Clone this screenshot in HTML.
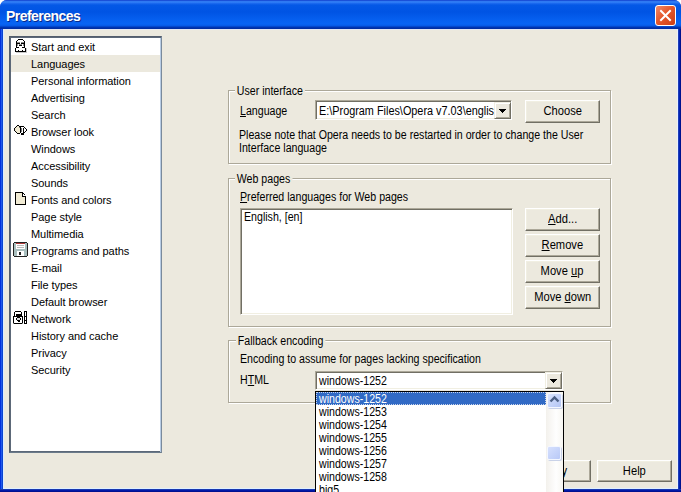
<!DOCTYPE html>
<html><head><meta charset="utf-8">
<style>
*{box-sizing:border-box}
html,body{margin:0;padding:0}
body{width:681px;height:492px;overflow:hidden;position:relative;background:#fff;font-family:"Liberation Sans",sans-serif;font-size:12px;color:#000}
.tx{display:inline-block;transform:scaleX(0.885);transform-origin:0 50%}
.btn .tx{transform:scaleX(0.93);transform-origin:50% 50%}
#frame{position:absolute;left:0;top:0;width:681px;height:492px;border-radius:7px 7px 0 0;background:linear-gradient(90deg,#0030dc 0,#0030dc 1px,#2058ea 1px,#2058ea 2px,#0a44d0 2px,#0a44d0 3px,#0842e0 3px,#0842e0 678px,#1c3cb8 678px,#1c3cb8 679px,#0022b4 679px,#0022b4 680px,#00128e 680px)}
#bot{position:absolute;left:0;top:489px;width:681px;height:3px;background:linear-gradient(180deg,#1838b0 0,#1838b0 1px,#0018a8 1px,#0018a8 2px,#001090 2px)}
#title{position:absolute;left:0;top:0;width:681px;height:29px;border-radius:7px 7px 0 0;
 background:linear-gradient(180deg,#0a30c4 0px,#2a70ec 1px,#3482f8 2px,#1a68ee 3.5px,#0458e6 5px,#0054e4 12px,#0660f0 20px,#0864f4 24px,#0658e4 26px,#0038b8 27px,#002a9c 29px)}
#title .t{position:absolute;left:6px;top:8px;color:#fff;font-weight:bold;font-size:14px;letter-spacing:-0.55px;text-shadow:1px 1px 0 #0a2a8a}
#close{position:absolute;left:655px;top:5px;width:21px;height:21px;border:1px solid #fff;border-radius:3px;background:linear-gradient(135deg,#f08a6a 0%,#e5582c 45%,#cc3e16 100%)}
#client{position:absolute;left:3px;top:29px;width:675px;height:460px;background:#ece9de;border-left:1px solid #dcecff;border-top:1px solid #e4e8f4;border-bottom:1px solid #e0f0ff;border-right:1px solid #e8f0ff}
#tree{position:absolute;left:9px;top:36px;width:153px;height:417px;background:#fff;border-style:solid;border-width:1px;border-color:#535d6c #7a8a9c #6a7a8a #535d6c;box-shadow:inset 1px 1px 0 #5c6878,inset -1px 0 0 #b8cce4,inset 0 -1px 0 #5c6878}
.item{position:absolute;left:1px;width:149px;height:17px;line-height:17px;padding-left:20px;padding-top:1px;white-space:nowrap;font-size:11px;letter-spacing:-0.05px}
.item.sel{background:#ece9de}
.grp{position:absolute;border:1px solid #aca899;box-shadow:1px 1px 0 #fff, inset 1px 1px 0 #fff}
.glab{position:absolute;background:#ece9de;padding:0 2px;line-height:13px;white-space:nowrap;transform:scaleX(0.885);transform-origin:0 50%}
.lbl{position:absolute;line-height:13px;white-space:nowrap;transform:scaleX(0.885);transform-origin:0 50%}
.btn{position:absolute;width:75px;height:23px;background:#ece9de;border-top:1px solid #fff;border-left:1px solid #fff;border-right:1px solid #716f64;border-bottom:1px solid #716f64;box-shadow:inset -1px -1px 0 #aca899, inset 1px 1px 0 #f1efe2;text-align:center;line-height:20px;white-space:nowrap}
.u{text-decoration:underline}
.combo{position:absolute;background:#fff;border-top:1px solid #aca899;border-left:1px solid #aca899;border-right:1px solid #fff;border-bottom:1px solid #fff;box-shadow:inset 1px 1px 0 #716f64, inset -1px -1px 0 #f1efe2;overflow:hidden;white-space:nowrap}
.dbtn{position:absolute;width:17px;height:17px;background:#ece9de;border-top:1px solid #f1efe2;border-left:1px solid #f1efe2;border-right:1px solid #716f64;border-bottom:1px solid #716f64;box-shadow:inset 1px 1px 0 #fff, inset -1px -1px 0 #aca899}
.dbtn svg{position:absolute;left:0;top:0}
#dd{position:absolute;left:315px;top:391px;width:249px;height:110px;background:#fff;border:1px solid #000;overflow:hidden}
.opt{position:absolute;left:0;width:230px;height:13px;line-height:13px;padding-left:3px;padding-top:1px;white-space:nowrap}
.opt.sel{background:#316ac5;color:#fff;outline:1px dotted #c8d4ea;outline-offset:-1px}
#sb{position:absolute;left:230px;top:0;width:17px;height:110px;background:linear-gradient(90deg,#f3f1ec,#fefefe 60%,#f7f6f1)}
#sbup{position:absolute;left:1px;top:1px;width:15px;height:15px;border:1px solid #f4f7ff;border-radius:2px;background:linear-gradient(135deg,#dde6fd,#c2d1f8 60%,#b4c5f2);box-shadow:1px 1px 0 #c9d2e8}
#thumb{position:absolute;left:1px;top:54px;width:14px;height:14px;border:1px solid #f4f7ff;border-radius:2px;background:linear-gradient(135deg,#d6e0fd,#c4d2fa 60%,#b8c8f6);box-shadow:1px 1px 0 #c9d2e8}
</style></head><body>
<div id="frame"></div><div id="bot"></div>
<div id="title"><div class="t">Preferences</div><div id="close"><svg width="19" height="19" style="position:absolute;left:0;top:0"><path d="M5 5 L14 14 M14 5 L5 14" stroke="#fff" stroke-width="2" stroke-linecap="square"/></svg></div></div>
<div id="client"></div>
<div id="tree">
<div class="item" style="top:1px">Start and exit</div>
<div class="item sel" style="top:18px">Languages</div>
<div class="item" style="top:35px">Personal information</div>
<div class="item" style="top:52px">Advertising</div>
<div class="item" style="top:69px">Search</div>
<div class="item" style="top:86px">Browser look</div>
<div class="item" style="top:103px">Windows</div>
<div class="item" style="top:120px">Accessibility</div>
<div class="item" style="top:137px">Sounds</div>
<div class="item" style="top:154px">Fonts and colors</div>
<div class="item" style="top:171px">Page style</div>
<div class="item" style="top:188px">Multimedia</div>
<div class="item" style="top:205px">Programs and paths</div>
<div class="item" style="top:222px">E-mail</div>
<div class="item" style="top:239px">File types</div>
<div class="item" style="top:256px">Default browser</div>
<div class="item" style="top:273px">Network</div>
<div class="item" style="top:290px">History and cache</div>
<div class="item" style="top:307px">Privacy</div>
<div class="item" style="top:324px">Security</div>
</div>
<svg style="position:absolute;left:0;top:0" width="40" height="340" shape-rendering="crispEdges">
<path d="M16 52h10v1h-10z M26 48h1v5h-1z" fill="#c8c8c8"/>
<path d="M17 42h3v1h-3z M21 42h3v1h-3z M17 44h1v2h-1z M23 44h1v2h-1z M19 44h3v1h-3z" fill="#8a8a8a"/>
<path d="M18 39h5v1h-5z M17 40h1v1h-1z M23 40h1v1h-1z M16 41h1v6h-1z M24 41h1v6h-1z M17 43h3v1h-3z M21 43h3v1h-3z M19 45h3v1h-3z M16 47h2v1h-2z M23 47h2v1h-2z M15 48h1v4h-1z M25 48h1v4h-1z M16 51h9v1h-9z M18 50h1v1h-1z M22 50h1v1h-1z M18 47h1v1h-1z M22 47h1v1h-1z" fill="#000"/>
<!-- browser look -->
<path d="M15 128h5v3h-5z M16 127h4v1h-4z M17 126h2v1h-2z M16 131h4v2h-4z" fill="#f1ead2"/>
<path d="M21 127h3v6h-3z M24 128h1v4h-1z M25 129h1v2h-1z" fill="#fff"/>
<path d="M17 125h2v1h-2z M16 126h1v1h-1z M15 127h1v1h-1z M14 128h1v3h-1z M15 131h1v1h-1z M16 132h1v1h-1z M17 133h3v1h-3z M19 126h5v1h-5z M24 127h1v1h-1z M25 128h1v1h-1z M26 129h1v2h-1z M25 131h1v1h-1z M24 132h1v1h-1z M20 127h1v6h-1z M23 128h1v5h-1z M21 133h3v2h-3z" fill="#000"/>
<path d="M19 127h1v1h-1z M21 128h1v4h-1z" fill="#777"/>
<!-- fonts and colors: page -->
<path d="M16 193h6v11h-6z M22 197h3v7h-3z" fill="#f1ebd4"/>
<path d="M23 194h1v2h-1z M24 195h1v1h-1z" fill="#fff"/>
<path d="M15 192h8v1h-8z M15 193h1v12h-1z M16 204h10v1h-10z M25 196h1v9h-1z M23 193h1v1h-1z M24 194h1v1h-1z M22 193h1v3h-1z M22 196h3v1h-3z" fill="#000"/>
<!-- floppy -->
<path d="M14 243h13v13h-13z" fill="#a9bfbf"/>
<path d="M16 243h9v6h-9z" fill="#fff"/>
<path d="M16 243h9v1h-9z" fill="#b03a3a"/>
<path d="M17 245h7v1h-7z M17 247h7v1h-7z" fill="#b9b9b9"/>
<path d="M17 251h7v5h-7z" fill="#fff"/>
<path d="M14 242h13v1h-13z M13 243h1v13h-1z M27 243h1v13h-1z M14 256h13v1h-13z M19 252h2v3h-2z" fill="#222"/>
<!-- network lock -->
<path d="M15 312h6v2h-6z M14 317h8v6h-8z M25 312h1v11h-1z" fill="#fff"/>
<path d="M15 311h6v1h-6z M14 312h1v4h-1z M21 312h1v4h-1z M16 314h5v2h-5z M13 316h10v1h-10z M13 317h1v6h-1z M22 317h1v6h-1z M14 323h8v1h-8z M16 318h1v2h-1z M20 318h1v2h-1z M17 317h3v1h-3z M17 320h3v1h-3z M18 321h2v1h-2z M24 311h3v1h-3z M24 312h1v12h-1z M26 312h1v12h-1z M24 323h3v1h-3z M25 316h1v1h-1z M25 320h1v1h-1z" fill="#000"/>
<path d="M17 318h3v2h-3z" fill="#d8d8d8"/>
<path d="M13 323h1v1h-1z M22 323h1v1h-1z" fill="#888"/>
</svg>
<div class="grp" style="left:228px;top:90px;width:383px;height:74px"></div>
<div class="glab" style="left:235px;top:85px">User interface</div>
<div class="lbl" style="left:240px;top:105px;"><span class="u">L</span>anguage</div>
<div class="combo" style="left:315px;top:100px;width:197px;height:20px"><div class="lbl" style="left:3px;top:4px;transform:scaleX(0.905)">E:\Program Files\Opera v7.03\englis</div></div>
<div class="dbtn" style="left:494px;top:102px"><svg width="17" height="17" shape-rendering="crispEdges"><path d="M4 6h7v1h-7z M5 7h5v1h-5z M6 8h3v1h-3z M7 9h1v1h-1z" fill="#000"/></svg></div>
<div class="btn" style="left:525px;top:100px"><span class="tx">Choose</span></div>
<div class="lbl" style="left:239px;top:129px;">Please note that Opera needs to be restarted in order to change the User</div>
<div class="lbl" style="left:239px;top:142px;">Interface language</div>
<div class="grp" style="left:228px;top:178px;width:383px;height:149px"></div>
<div class="glab" style="left:235px;top:173px">Web pages</div>
<div class="lbl" style="left:240px;top:191px;"><span class="u">P</span>referred languages for Web pages</div>
<div class="combo" style="left:240px;top:208px;width:273px;height:107px"><div class="lbl" style="left:3px;top:2px">English, [en]</div></div>
<div class="btn" style="left:525px;top:208px"><span class="tx"><span class="u">A</span>dd...</span></div>
<div class="btn" style="left:525px;top:234px"><span class="tx"><span class="u">R</span>emove</span></div>
<div class="btn" style="left:525px;top:260px"><span class="tx">Move <span class="u">u</span>p</span></div>
<div class="btn" style="left:525px;top:286px"><span class="tx">Move <span class="u">d</span>own</span></div>
<div class="grp" style="left:228px;top:340px;width:383px;height:63px"></div>
<div class="glab" style="left:236px;top:335px">Fallback encoding</div>
<div class="lbl" style="left:240px;top:353px;">Encoding to assume for pages lacking specification</div>
<div class="lbl" style="left:240px;top:374px;">H<span class="u">T</span>ML</div>
<div class="combo" style="left:315px;top:371px;width:248px;height:19px"><div class="lbl" style="left:3px;top:3px">windows-1252</div></div>
<div class="dbtn" style="left:545px;top:372px"><svg width="17" height="17" shape-rendering="crispEdges"><path d="M4 6h7v1h-7z M5 7h5v1h-5z M6 8h3v1h-3z M7 9h1v1h-1z" fill="#000"/></svg></div>
<div class="btn" style="left:516px;top:460px;height:22px"><span class="tx">Apply</span></div>
<div class="btn" style="left:597px;top:460px;height:22px"><span class="tx">Help</span></div>
<div id="dd">
<div class="opt sel" style="top:0px"><span class="tx">windows-1252</span></div>
<div class="opt" style="top:13px"><span class="tx">windows-1253</span></div>
<div class="opt" style="top:26px"><span class="tx">windows-1254</span></div>
<div class="opt" style="top:39px"><span class="tx">windows-1255</span></div>
<div class="opt" style="top:52px"><span class="tx">windows-1256</span></div>
<div class="opt" style="top:65px"><span class="tx">windows-1257</span></div>
<div class="opt" style="top:78px"><span class="tx">windows-1258</span></div>
<div class="opt" style="top:91px"><span class="tx">big5</span></div>
<div id="sb"><div id="sbup"><svg width="13" height="13" style="position:absolute;left:0;top:0"><path d="M2.5 7.5 L6.5 3.5 L10.5 7.5" stroke="#4d6185" stroke-width="2.4" fill="none"/></svg></div><div id="thumb"></div></div>
</div>
</body></html>
